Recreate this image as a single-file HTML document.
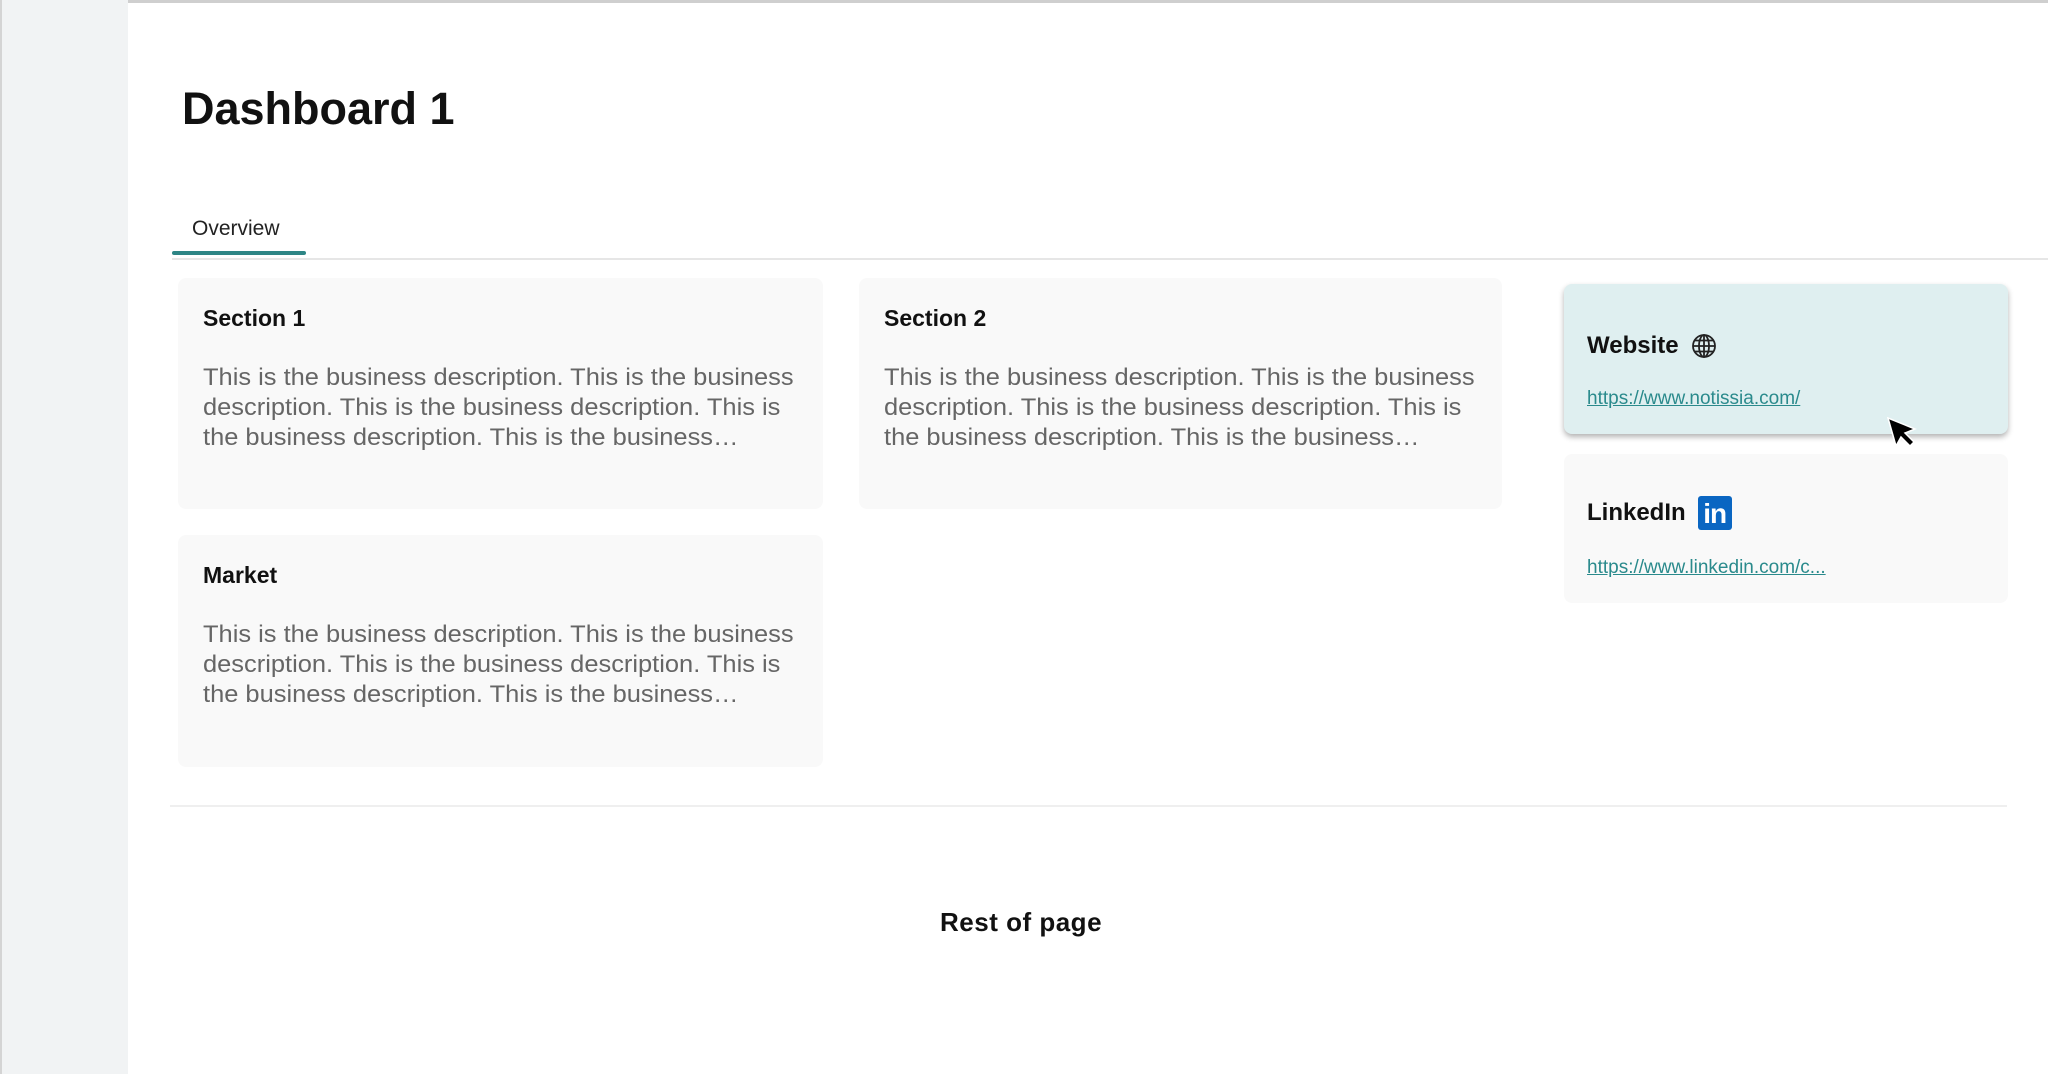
<!DOCTYPE html>
<html><head><meta charset="utf-8"><style>
*{margin:0;padding:0;box-sizing:border-box}
body{width:2048px;height:1074px;background:#fff;font-family:"Liberation Sans",Arial,sans-serif;position:relative;overflow:hidden}
.abs{position:absolute}
.side{left:0;top:0;width:128px;height:1074px;background:#f1f3f4;border-left:2px solid #d4d4d4}
.topb{left:0;top:0;width:2048px;height:3px;background:#cfcfcf}
h1{position:absolute;left:182px;top:81px;font-size:45px;font-weight:bold;color:#111;line-height:56px}
.tab{left:192px;top:217px;font-size:21px;color:#222}
.tabul{left:172px;top:251px;width:134px;height:4px;background:#2d8585;border-radius:2px}
.tabline{left:172px;top:258px;width:1876px;height:2px;background:#e6e6e6}
.card{background:#f9f9f9;border-radius:8px}
.ct{font-size:23px;font-weight:bold;color:#111;position:absolute;left:25px;top:27px}
.cd{position:absolute;left:25px;top:85px;font-size:24px;line-height:30px;color:#666;white-space:nowrap;transform:scaleX(1.06);transform-origin:left top}
.link{font-size:19px;color:#2a8a8c;text-decoration:underline;position:absolute;left:23px}
.lt{font-size:24px;font-weight:bold;color:#111;position:absolute;left:23px;display:flex;align-items:center;gap:12px}
</style></head><body>
<div class="abs topb"></div>
<div class="abs side"></div>
<h1>Dashboard 1</h1>
<div class="abs tab">Overview</div>
<div class="abs tabline"></div>
<div class="abs tabul"></div>

<div class="abs card" style="left:178px;top:278px;width:645px;height:231px">
<div class="ct">Section 1</div>
<div class="cd">This is the business description. This is the business<br>description. This is the business description. This is<br>the business description. This is the business…</div>
</div>
<div class="abs card" style="left:859px;top:278px;width:643px;height:231px">
<div class="ct">Section 2</div>
<div class="cd">This is the business description. This is the business<br>description. This is the business description. This is<br>the business description. This is the business…</div>
</div>
<div class="abs card" style="left:178px;top:535px;width:645px;height:232px">
<div class="ct">Market</div>
<div class="cd">This is the business description. This is the business<br>description. This is the business description. This is<br>the business description. This is the business…</div>
</div>

<div class="abs" style="left:1564px;top:284px;width:444px;height:150px;background:#dfeff0;border-radius:8px;box-shadow:0 3px 6px rgba(0,0,0,.3)">
<div class="lt" style="top:48px">Website
<svg width="26" height="26" viewBox="0 0 26 26" fill="none" stroke="#222" stroke-width="1.8"><circle cx="13" cy="13" r="11"/><ellipse cx="13" cy="13" rx="5" ry="11"/><line x1="2" y1="13" x2="24" y2="13"/><line x1="4" y1="7.5" x2="22" y2="7.5"/><line x1="4" y1="18.5" x2="22" y2="18.5"/><line x1="13" y1="2" x2="13" y2="24"/></svg></div>
<div class="link" style="top:104px">https://www.notissia.com/</div>
</div>
<div class="abs card" style="left:1564px;top:454px;width:444px;height:149px">
<div class="lt" style="top:42px">LinkedIn
<span style="display:inline-block;width:34px;height:34px;background:#0a66c2;border-radius:3px;color:#fff;font-size:28px;font-weight:bold;line-height:36px;text-align:center;letter-spacing:-1px">in</span></div>
<div class="link" style="top:103px">https://www.linkedin.com/c...</div>
</div>

<svg class="abs" style="left:1886px;top:416px" width="34" height="34" viewBox="0 0 34 34"><path d="M2 2 L10 30 L15 21 L24 30 L28 26 L19 17 L29 13 Z" fill="#000" stroke="#fff" stroke-width="1.5"/></svg>

<div class="abs" style="left:170px;top:805px;width:1837px;height:2px;background:#efefef"></div>
<div class="abs" style="left:940px;top:907px;font-size:26px;font-weight:bold;color:#111;letter-spacing:0.5px">Rest of page</div>
</body></html>
